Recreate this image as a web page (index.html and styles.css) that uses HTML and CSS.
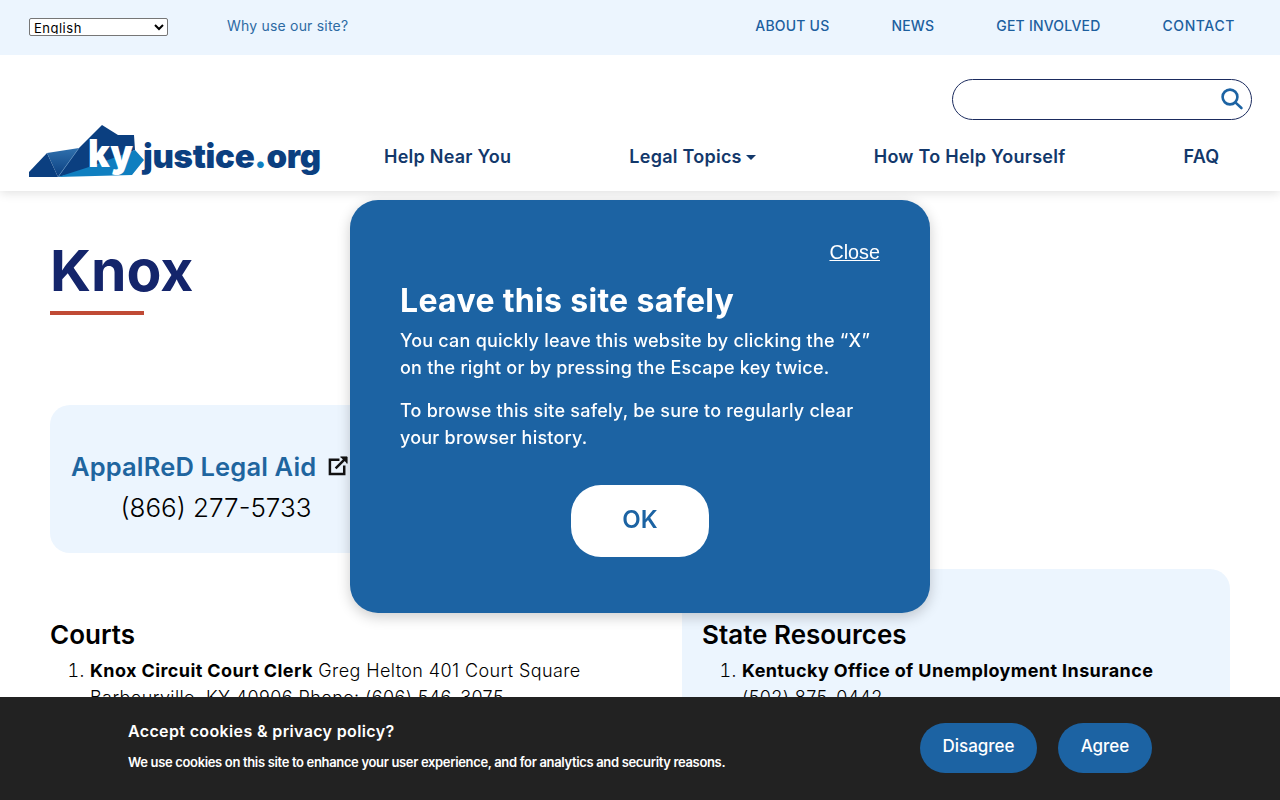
FILE: index.html
```html
<!DOCTYPE html>
<html lang="en">
<head>
  <meta charset="UTF-8">
  <meta name="viewport" content="width=device-width, initial-scale=1.0">
  <title>Knox - kyjustice.org</title>
  <link rel="stylesheet" href="styles.css">
</head>
<body>
  <div class="topbar">
    <select class="lang-select">
      <option>English</option>
    </select>
    <a class="why-link" href="#">Why use our site?</a>
    <nav class="top-nav">
      <a href="#">ABOUT US</a>
      <a href="#">NEWS</a>
      <a href="#">GET INVOLVED</a>
      <a href="#">CONTACT</a>
    </nav>
  </div>

  <header class="site-header">
    <div class="search-row">
      <div class="search-box">
        <svg class="search-icon" width="24" height="24" viewBox="0 0 24 24" fill="none" stroke="#1c63a3" stroke-width="2.6">
          <circle cx="10" cy="10" r="7.4"/>
          <path d="M15.6 15.6 L21.4 21" stroke-linecap="round"/>
        </svg>
      </div>
    </div>
    <div class="nav-row">
      <svg class="logo" width="292" height="52" viewBox="0 0 292 52">
        <defs>
          <linearGradient id="bandFade" x1="0" y1="0" x2="0" y2="1">
            <stop offset="0" stop-color="#2f70ad"/>
            <stop offset="1" stop-color="#0b3f80"/>
          </linearGradient>
        </defs>
        <polygon points="0,47 18,28 29,52 0,52" fill="#0b3f80"/>
        <polygon points="18,28 50,23 29,52" fill="url(#bandFade)"/>
        <polygon points="29,52 50,23 73,0 89,10 105,10 106,25 60,45" fill="#0b3f80"/>
        <polygon points="29,52 60,42 106,25 115,35 103,50" fill="#0f7fc0"/>
        <path d="M29 52 L50 23" stroke="#5f93c4" stroke-width="0.6"/>
        <text x="59" y="42" class="logo-ky" textLength="45" lengthAdjust="spacingAndGlyphs">ky</text>
        <text x="114" y="43" class="logo-name">justice<tspan class="logo-dot">.</tspan>org</text>
      </svg>
      <nav class="main-nav">
        <a href="#">Help Near You</a>
        <a href="#" class="has-caret">Legal Topics</a>
        <a href="#">How To Help Yourself</a>
        <a href="#">FAQ</a>
      </nav>
    </div>
  </header>

  <main class="content">
    <h1 class="page-title">Knox</h1>
    <div class="title-rule"></div>

    <div class="aid-card">
      <div class="aid-name">
        <a href="#">AppalReD Legal Aid</a>
        <svg width="21" height="21" viewBox="0 0 22 22" fill="none" stroke="#111" stroke-width="2.6">
          <path d="M12 5 H2 V20 H17 V11"/>
          <path d="M8 14 L19 3"/>
          <path d="M13 2 H20 V9" fill="#111" stroke-width="1"/>
        </svg>
      </div>
      <div class="aid-phone">(866) 277-5733</div>
    </div>

    <div class="resources">
      <section class="res-col">
        <h2>Courts</h2>
        <ol>
          <li><strong>Knox Circuit Court Clerk</strong> Greg Helton 401 Court Square Barbourville, KY 40906 Phone: (606) 546-3075</li>
        </ol>
      </section>
      <section class="res-col res-tinted">
        <h2>State Resources</h2>
        <ol>
          <li><strong>Kentucky Office of Unemployment Insurance</strong><br>(502) 875-0442</li>
        </ol>
      </section>
    </div>
  </main>

  <div class="safe-modal">
    <a class="modal-close" href="#">Close</a>
    <h2>Leave this site safely</h2>
    <p>You can quickly leave this website by clicking the “X”<br>on the right or by pressing the Escape key twice.</p>
    <p>To browse this site safely, be sure to regularly clear<br>your browser history.</p>
    <button class="modal-ok">OK</button>
  </div>

  <div class="cookie-bar">
    <div class="cookie-text">
      <div class="cookie-title">Accept cookies &amp; privacy policy?</div>
      <div class="cookie-desc">We use cookies on this site to enhance your user experience, and for analytics and security reasons.</div>
    </div>
    <div class="cookie-btns">
      <button class="disagree">Disagree</button>
      <button class="agree">Agree</button>
    </div>
  </div>
</body>
</html>
```

FILE: styles.css
```css
body {
  margin: 0;
  font-family: 'Inter', 'Open Sans', sans-serif;
  background-color: #fff;
  color: #000;
  overflow: hidden;
}
a {
  text-decoration: none;
}
.topbar {
  height: 55px;
  box-sizing: border-box;
  background-color: #ecf5fe;
  display: flex;
  align-items: center;
  padding: 0 45px 4px 29px;
  position: relative;
  z-index: 1;
}
.lang-select {
  width: 139px;
  height: 18px;
  margin-top: 3px;
  box-sizing: border-box;
  padding: 0 0 1px;
  font-family: 'Inter', sans-serif;
  font-size: 13px;
  letter-spacing: 0.5px;
  background-color: #fff;
  color: #000;
  border: 1px solid #767676;
  border-radius: 2px;
}
.why-link {
  margin-left: 59px;
  font-size: 14px;
  letter-spacing: 0.2px;
  color: #2d6aa3;
}
.top-nav {
  margin-left: auto;
  display: flex;
  gap: 62px;
}
.top-nav a {
  font-size: 14px;
  font-weight: 500;
  letter-spacing: 0.2px;
  color: #1c5f9e;
}
.top-nav a:last-child {
  letter-spacing: 0.6px;
}
.site-header {
  height: 136px;
  background-color: #fff;
  box-shadow: 0 2px 10px rgba(0,0,0,0.12);
  padding: 0 28px 0 29px;
  box-sizing: border-box;
  position: relative;
}
.search-row {
  display: flex;
  justify-content: flex-end;
  padding-top: 24px;
}
.search-box {
  width: 300px;
  height: 41px;
  box-sizing: border-box;
  border: 1px solid #1b2b5e;
  border-radius: 21px;
  display: flex;
  align-items: center;
  justify-content: flex-end;
  padding: 0 7px 2px 0;
}
.nav-row {
  display: flex;
  align-items: flex-start;
  margin-top: 5px;
}
.logo {
  flex: none;
}
.logo-ky {
  font-family: 'Inter', sans-serif;
  font-size: 38px;
  font-weight: 900;
  fill: #fff;
}
.logo-name {
  font-family: 'Inter', sans-serif;
  font-size: 33px;
  font-weight: 900;
  letter-spacing: -0.3px;
  fill: #0b3f80;
}
.logo-dot {
  fill: #0f7fc0;
}
.main-nav {
  display: flex;
  gap: 118px;
  margin-left: 63px;
  padding-top: 21px;
}
.main-nav a {
  font-size: 18px;
  line-height: 22px;
  font-weight: 600;
  letter-spacing: 0.25px;
  color: #12386b;
  white-space: nowrap;
}
.has-caret::after {
  content: "";
  display: inline-block;
  margin-left: 4px;
  vertical-align: 3px;
  border-top: 5px solid #12386b;
  border-left: 5px solid transparent;
  border-right: 5px solid transparent;
}
.content {
  padding: 0 50px;
}
.page-title {
  margin: 44px 0 0;
  font-size: 57px;
  line-height: 72px;
  font-weight: 700;
  color: #14256b;
}
.title-rule {
  width: 94px;
  height: 4px;
  margin-top: 4px;
  background-color: #c04a35;
}
.aid-card {
  width: 330px;
  height: 148px;
  margin-top: 90px;
  box-sizing: border-box;
  padding: 43px 20px 0 21px;
  background-color: #ecf5fe;
  border-radius: 20px;
  text-align: center;
}
.aid-name {
  display: flex;
  align-items: center;
  gap: 12px;
  height: 36px;
}
.aid-name a {
  font-size: 25.5px;
  font-weight: 600;
  letter-spacing: 0.15px;
  color: #1f659f;
  white-space: nowrap;
}
.aid-name svg {
  flex: none;
  margin-top: -2px;
}
.aid-phone {
  width: 290px;
  margin-top: 6px;
  font-size: 26px;
  line-height: 36px;
  font-weight: 300;
}
.resources {
  display: grid;
  grid-template-columns: 1fr 548px;
  gap: 20px;
  margin-top: 16px;
}
.res-col {
  padding: 51px 20px 0;
  min-height: 180px;
}
.res-col:first-child {
  padding-left: 0;
}
.res-tinted {
  background-color: #ecf5fe;
  border-radius: 20px;
}
.res-col h2 {
  margin: 0 0 7px;
  font-size: 26px;
  line-height: 30px;
  font-weight: 600;
}
.res-col ol {
  margin: 0;
  padding-left: 40px;
  font-size: 18px;
  line-height: 27px;
  font-weight: 300;
  letter-spacing: 0.4px;
}
.res-col strong {
  font-weight: 700;
  letter-spacing: 0.4px;
}
.safe-modal {
  position: fixed;
  top: 200px;
  left: 0;
  right: 0;
  margin: 0 auto;
  width: 580px;
  height: 413px;
  box-sizing: border-box;
  padding: 40px 50px;
  background-color: #1c63a3;
  border-radius: 28px;
  box-shadow: 0 4px 14px rgba(0,0,0,0.2);
  color: #fff;
  text-align: center;
}
.modal-close {
  display: block;
  text-align: right;
  font-family: 'Liberation Sans', Arial, sans-serif;
  font-size: 19.8px;
  line-height: 24px;
  color: #fff;
  text-decoration: underline;
}
.safe-modal h2 {
  margin: 15px 0 4px;
  text-align: left;
  font-size: 32px;
  line-height: 44px;
  font-weight: 700;
  letter-spacing: 0.32px;
}
.safe-modal p {
  margin: 0 0 16px;
  text-align: left;
  font-size: 18px;
  line-height: 27px;
  font-weight: 500;
  letter-spacing: 0.22px;
  white-space: nowrap;
}
.modal-ok {
  display: block;
  width: 138px;
  height: 72px;
  margin: 34px auto 0;
  padding: 0 0 3px;
  border: none;
  border-radius: 30px;
  background-color: #fff;
  color: #1c63a3;
  font-family: 'Inter', sans-serif;
  font-size: 24px;
  font-weight: 600;
}
.cookie-bar {
  position: fixed;
  left: 0;
  right: 0;
  bottom: 0;
  height: 103px;
  box-sizing: border-box;
  padding: 26px 128px 0;
  background-color: #222;
  color: #fff;
  display: flex;
  justify-content: space-between;
}
.cookie-title {
  margin-top: -4px;
  font-size: 16px;
  line-height: 24px;
  font-weight: 600;
  letter-spacing: 0.36px;
}
.cookie-desc {
  margin-top: 9px;
  font-size: 13px;
  line-height: 20px;
  font-weight: 600;
  letter-spacing: -0.34px;
}
.cookie-btns {
  display: flex;
  gap: 21px;
}
.cookie-btns button {
  height: 50px;
  padding: 0 0 4px;
  border: none;
  border-radius: 25px;
  background-color: #1c63a3;
  color: #fff;
  font-family: 'Inter', sans-serif;
  font-size: 17px;
  font-weight: 500;
}
.disagree {
  width: 117px;
}
.agree {
  width: 94px;
}
```
